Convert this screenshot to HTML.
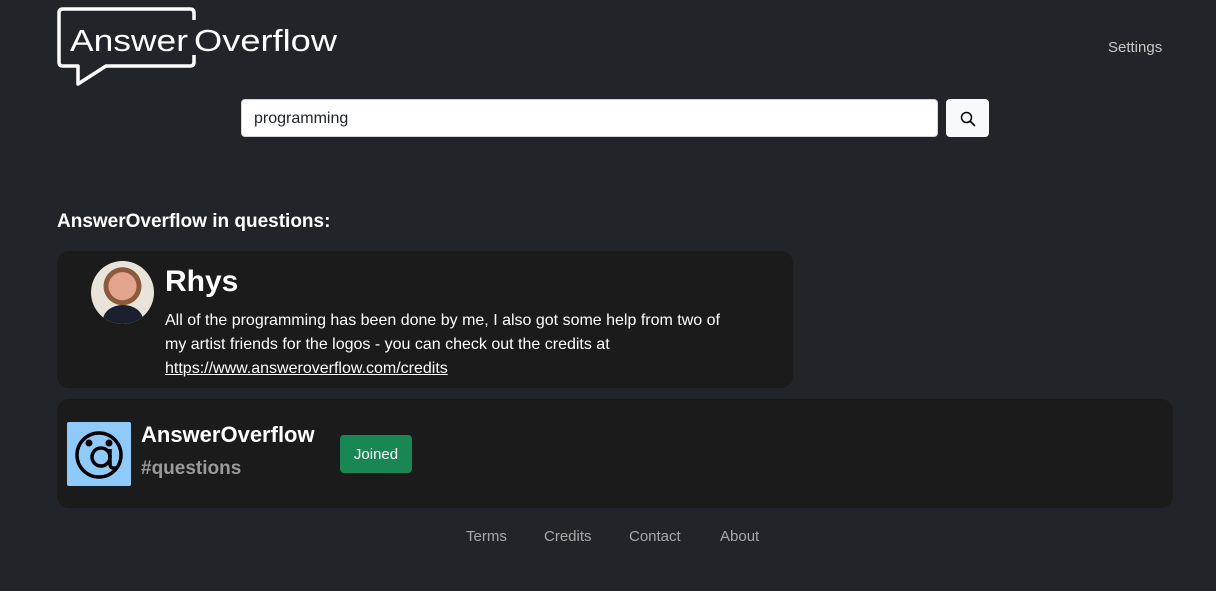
<!DOCTYPE html>
<html><head><style>
body{margin:0;background:#212529;width:1216px;height:591px;overflow:hidden;font-family:"Liberation Sans",sans-serif;color:#fff;position:relative}
.a{position:absolute}
</style></head><body>
<svg class="a" style="left:56px;top:6px" width="290" height="82" viewBox="0 0 290 82">
<path d="M138 14 V7 Q138 3 134 3 H7 Q3 3 3 7 V56 Q3 60 7 60 H22 V78 L50 60 H134 Q138 60 138 56 V49" fill="none" stroke="#fff" stroke-width="3.5" stroke-linejoin="round"/>
<text x="14" y="45" font-family="Liberation Sans,sans-serif" font-size="31" fill="#fff" textLength="118" lengthAdjust="spacingAndGlyphs">Answer</text>
<text x="138" y="45" font-family="Liberation Sans,sans-serif" font-size="31" fill="#fff" textLength="143" lengthAdjust="spacingAndGlyphs">Overflow</text>
</svg>
<div class="a" style="left:1108px;top:39px;font-size:15px;color:#c8c8c8">Settings</div>
<div class="a" style="left:241px;top:99px;width:697px;height:38px;background:#fff;border:1px solid #ced4da;border-radius:4px;box-sizing:border-box"></div>
<div class="a" style="left:254px;top:110px;font-size:16px;color:#212529">programming</div>
<div class="a" style="left:946px;top:99px;width:43px;height:38px;background:#f8f9fa;border-radius:4px"></div>
<svg class="a" style="left:960px;top:111px" width="16" height="16" viewBox="0 0 16 16"><circle cx="6.5" cy="6.5" r="5" fill="none" stroke="#000" stroke-width="1.5"/><path d="M10 10 L15 15" stroke="#000" stroke-width="1.6"/></svg>
<div class="a" style="left:57px;top:211px;font-size:19px;font-weight:bold">AnswerOverflow in questions:</div>
<div class="a" style="left:57px;top:251px;width:736px;height:137px;background:#1b1b1c;border-radius:12px"></div>
<div class="a" style="left:91px;top:261px;width:63px;height:63px;border-radius:50%;background:radial-gradient(circle at 50% 40%,#e2a48c 0 28%,#8a5a3a 29% 38%,#e8e4dc 39%);overflow:hidden"><div style="position:absolute;left:12px;top:44px;width:40px;height:30px;border-radius:50%;background:#1a2030"></div></div>
<div class="a" style="left:165px;top:265px;font-size:30px;font-weight:bold">Rhys</div>
<div class="a" style="left:165px;top:309px;width:572px;font-size:16px;line-height:24px">All of the programming has been done by me, I also got some help from two of my artist friends for the logos - you can check out the credits at <u>https://www.answeroverflow.com/credits</u></div>
<div class="a" style="left:57px;top:399px;width:1116px;height:109px;background:#1b1b1c;border-radius:12px"></div>
<div class="a" style="left:67px;top:422px;width:64px;height:64px;background:#8ecbfb;border-radius:2px"></div>
<svg class="a" style="left:67px;top:422px" width="64" height="64" viewBox="0 0 64 64"><circle cx="32" cy="33" r="22" fill="none" stroke="#000" stroke-width="3.5"/><circle cx="34" cy="35" r="9" fill="none" stroke="#000" stroke-width="3.5"/><path d="M43 27 V42 Q43 47 49 46" fill="none" stroke="#000" stroke-width="3.5"/><circle cx="22" cy="21" r="3.5"/><circle cx="42" cy="21" r="3.5"/></svg>
<div class="a" style="left:141px;top:422px;font-size:22px;font-weight:bold">AnswerOverflow</div>
<div class="a" style="left:141px;top:458px;font-size:19px;font-weight:bold;color:#9a9a9a">#questions</div>
<div class="a" style="left:340px;top:435px;width:72px;height:38px;background:#198754;border-radius:4px;font-size:15px;line-height:39px;text-align:center">Joined</div>
<div class="a" style="left:466px;top:528px;font-size:15px;color:#a8a8a8">Terms</div>
<div class="a" style="left:544px;top:528px;font-size:15px;color:#a8a8a8">Credits</div>
<div class="a" style="left:629px;top:528px;font-size:15px;color:#a8a8a8">Contact</div>
<div class="a" style="left:720px;top:528px;font-size:15px;color:#a8a8a8">About</div>
</body></html>
